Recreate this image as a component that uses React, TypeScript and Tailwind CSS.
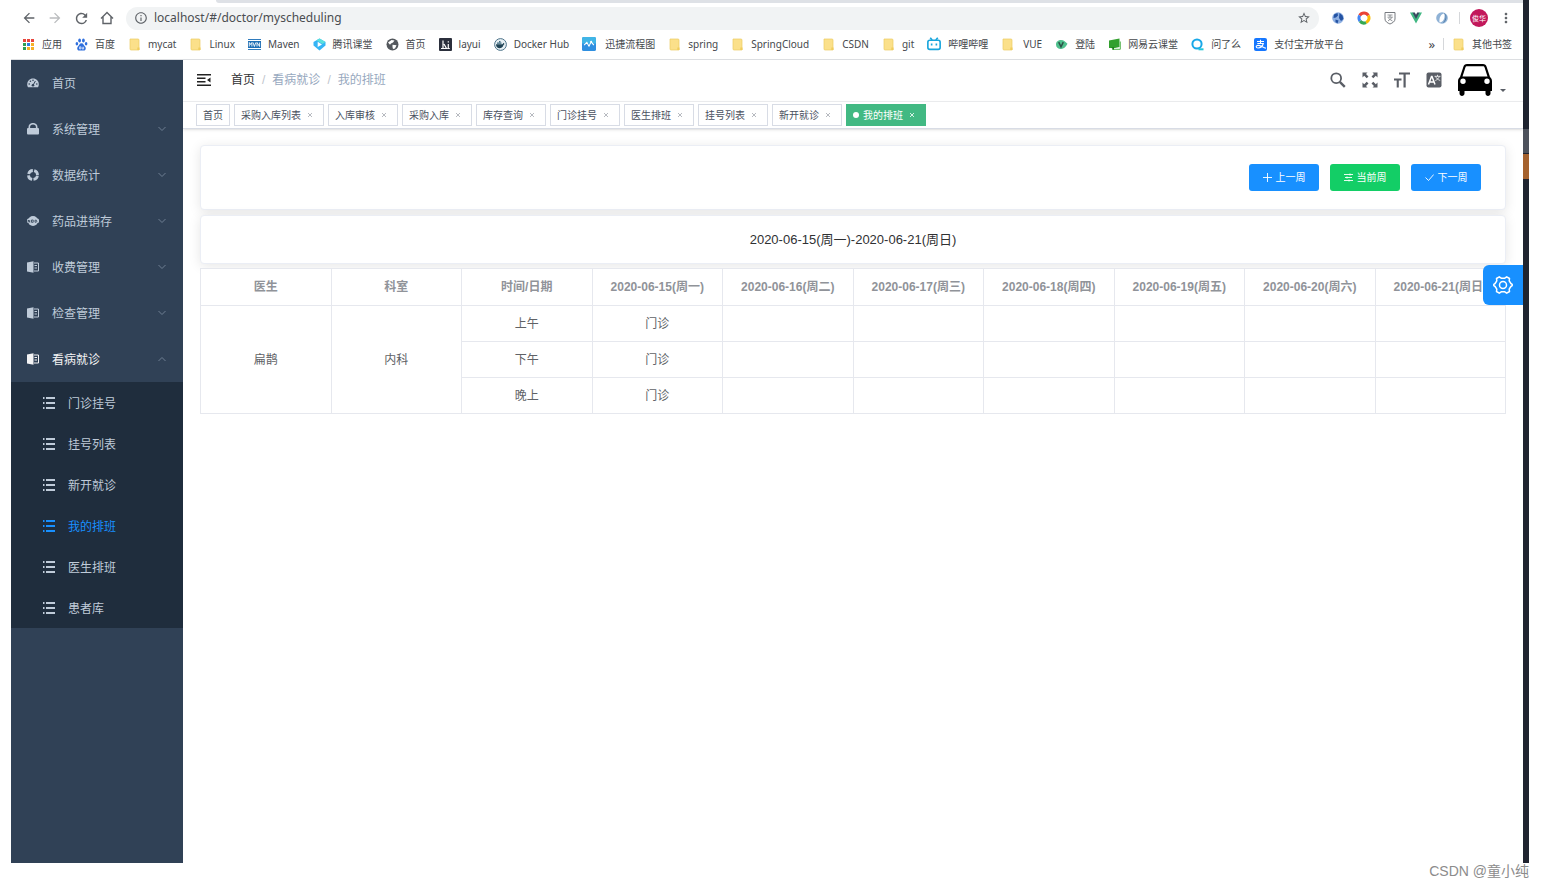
import React, { useState } from 'react';
import clsx from 'clsx';
import {
  MdArrowBack,
  MdArrowForward,
  MdInfoOutline,
  MdMoreVert,
  MdRefresh,
  MdStarBorder,
} from 'react-icons/md';

/* ---------- Bookmark icons ---------- */

const Folder = () => (
  <svg viewBox="0 0 13 13" className="size-[13px]">
    <path d="M2 1h8a1 1 0 0 1 1 1v10H3a1 1 0 0 1-1-1z" fill="#fbe08a" stroke="#eccb62" strokeWidth=".7" />
    <path d="M9.300 9.500h2.200V12H9.300z" fill="#f0cd5d" />
  </svg>
);

const AppsIcon = () => (
  <svg viewBox="0 0 13 13" className="size-[13px]">
    {['#e8453c', '#e8453c', '#e8453c', '#2e9e52', '#2f7de1', '#f6b026', '#2e9e52', '#f6b026', '#f6b026'].map((c, i) => (
      <rect key={i} x={1 + (i % 3) * 4} y={1 + Math.floor(i / 3) * 4} width="3" height="3" fill={c} />
    ))}
  </svg>
);

const BaiduIcon = () => (
  <svg viewBox="0 0 13 13" className="size-[13px]" fill="#2f6fdd">
    <ellipse cx="4.600" cy="2.600" rx="1.400" ry="2" />
    <ellipse cx="8.400" cy="2.600" rx="1.400" ry="2" />
    <ellipse cx="1.900" cy="5.800" rx="1.300" ry="1.800" />
    <ellipse cx="11.100" cy="5.800" rx="1.300" ry="1.800" />
    <path d="M6.500 5.200c2 0 2.300 2 3.500 3.200 1.400 1.500.8 4.100-1.300 4.100H4.300c-2.100 0-2.700-2.600-1.300-4.100C4.200 7.200 4.500 5.200 6.500 5.200z" />
    <path d="M4.600 8.800h1.200v2.200H4.600zM7.200 8.800v2.200h1.400V8.800" fill="none" stroke="#fff" strokeWidth=".7" />
  </svg>
);

const MavenIcon = () => (
  <svg viewBox="0 0 13 13" className="size-[13px]">
    <path d="M0 1.500h13M0 11.500h13" stroke="#2f7bbd" strokeWidth="1" />
    <rect y="3" width="13" height="7" fill="#1f6fb5" />
    <path d="M1.300 8.500v-4l1.300 2 1.300-2v4M5 4.500l1.400 4 1.400-4M9 8.500v-4l2.600 4v-4" fill="none" stroke="#fff" strokeWidth=".9" />
  </svg>
);

const TencentIcon = () => (
  <svg viewBox="0 0 13 13" className="size-[13px]">
    <path d="M6.500.500 12.500 4v3.500l-6 5-6-5V4z" fill="#35b4f5" />
    <path d="M6.500.500 12.500 4l-3 2-6-3.700z" fill="#5be0dc" />
    <path d="M4.700 3.800 9 6.500 4.700 9z" fill="#fff" />
  </svg>
);

const GlobeIcon = () => (
  <svg viewBox="0 0 13 13" className="size-[13px]">
    <circle cx="6.500" cy="6.500" r="6" fill="#54585d" />
    <path d="M2 4.500 5.500 2l3 .5-1.500 2L5 5.500l-1 1.300zM6.500 6.800l4 .4-1.500 3.300-2 .5-.5-2z" fill="#fff" />
  </svg>
);

const LayuiIcon = () => (
  <svg viewBox="0 0 13 13" className="size-[13px]">
    <rect width="13" height="13" rx="1" fill="#2b2f3c" />
    <path d="M4 2.500v8M2 10.500h5.500L5 6M9.300 6v4.500M9.300 3.200v1.300M8.300 10.500h2.500" fill="none" stroke="#fff" strokeWidth="1.200" />
  </svg>
);

const DockerIcon = () => (
  <svg viewBox="0 0 13 13" className="size-[13px]">
    <circle cx="6.500" cy="6.500" r="5.900" fill="#e8f0f4" stroke="#4c7288" strokeWidth="1" />
    <path d="M2 6.300h6.500l1-1.500 1 1.200-1 1C8.800 9.600 7 10.300 5.200 10.200 3 10 2 8.500 2 6.300z" fill="#1f4355" />
    <path d="M3 4.500h4.500v1.300H3zM5 3h1.500v1.200H5z" fill="#3d6a80" />
  </svg>
);

const FlowIcon = () => (
  <svg viewBox="0 0 13 13" className="size-[14px]">
    <rect width="13" height="13" rx="1.500" fill="#2f8fe0" />
    <path d="M0 1.500Q0 0 1.500 0h10Q13 0 13 1.500V6H0z" fill="#40b5e6" />
    <path d="M2 7.500 4.500 5l2 3.500L8.500 4.500l2.500 3" fill="none" stroke="#fff" strokeWidth="1" />
    <circle cx="8.500" cy="4.300" r=".9" fill="#fff" />
  </svg>
);

const BiliIcon = () => (
  <svg viewBox="0 0 13 13" className="size-[14px]" fill="none" stroke="#18a5dc" strokeWidth="1.500">
    <rect x=".8" y="3" width="11.400" height="8.500" rx="1.800" />
    <path d="M3 .600 4.800 2.800M10 .600 8.200 2.800M4.300 6v1.800M8.700 6v1.800" />
  </svg>
);

const LoginIcon = () => (
  <svg viewBox="0 0 13 13" className="size-[13px]">
    <path d="M1 6.500C1 3.700 3.300 2 6 2c3 0 4.500 2 6.500 3.700C11 8.500 9 11 6 11S1 9.300 1 6.500z" fill="#4fc08d" />
    <path d="m3.700 4.200 2.300 4.600 2.300-4.600" fill="none" stroke="#2c5147" strokeWidth="1.500" />
  </svg>
);

const NeteaseIcon = () => (
  <svg viewBox="0 0 13 13" className="size-[13px]">
    <path d="M1 2.500 11.500.500v8.500L7 10H1z" fill="#32a02e" />
    <path d="M12.300 3.500v7.800H4" fill="none" stroke="#55b351" strokeWidth="1" />
    <path d="M3 9.500 6 12V9z" fill="#1c7f19" />
  </svg>
);

const AskIcon = () => (
  <svg viewBox="0 0 13 13" className="size-[13px]" fill="none" strokeWidth="2">
    <circle cx="6" cy="6" r="4.600" stroke="#18a8e8" />
    <path d="M7.500 11.300h5" stroke="#23c5d8" />
  </svg>
);

const AlipayIcon = () => (
  <svg viewBox="0 0 13 13" className="size-[13px]">
    <rect width="13" height="13" rx="2" fill="#1677ff" />
    <path d="M3 3.500h7M6.500 1.800V5.500M3.300 5.500h6C8.500 8.300 6.500 10 4 10c-2.300 0-2.500-2.600 0-2.600 2.500 0 4.500 1.800 8 2.900" fill="none" stroke="#fff" strokeWidth="1.100" />
  </svg>
);

const bookmarks = [
  { label: '应用', icon: <AppsIcon /> },
  { label: '百度', icon: <BaiduIcon /> },
  { label: 'mycat', icon: <Folder /> },
  { label: 'Linux', icon: <Folder /> },
  { label: 'Maven', icon: <MavenIcon /> },
  { label: '腾讯课堂', icon: <TencentIcon /> },
  { label: '首页', icon: <GlobeIcon /> },
  { label: 'layui', icon: <LayuiIcon /> },
  { label: 'Docker Hub', icon: <DockerIcon /> },
  { label: '迅捷流程图', icon: <FlowIcon />, wide: true },
  { label: 'spring', icon: <Folder /> },
  { label: 'SpringCloud', icon: <Folder /> },
  { label: 'CSDN', icon: <Folder /> },
  { label: 'git', icon: <Folder /> },
  { label: '哔哩哔哩', icon: <BiliIcon /> },
  { label: 'VUE', icon: <Folder />, wide: true },
  { label: '登陆', icon: <LoginIcon /> },
  { label: '网易云课堂', icon: <NeteaseIcon /> },
  { label: '问了么', icon: <AskIcon /> },
  { label: '支付宝开放平台', icon: <AlipayIcon /> },
];

/* ---------- Browser chrome ---------- */

const HomeOutline = () => (
  <svg viewBox="0 0 14 14" className="size-[14px]" fill="none" stroke="#5f6368" strokeWidth="1.400">
    <path d="M1 7.500 7 1.500l6 6M3 6v6.500h8V6" />
  </svg>
);

const extensions = [
  {
    name: 'Globe',
    icon: (
      <svg viewBox="0 0 14 14" className="size-[14px]">
        <circle cx="7" cy="7" r="5.800" fill="#8fb0e2" />
        <path d="M3 3.500 6.500 2l.5 2.500L5 6.500l-2.500.5zM8.500 2l3 2.500L12.500 8 10 10 8 7zM4.500 8.500l3 1-1 3-2-1.500z" fill="#2453a3" />
      </svg>
    ),
  },
  {
    name: 'Color ring',
    icon: (
      <svg viewBox="0 0 14 14" className="size-[14px]" fill="none" strokeWidth="3">
        <path d="M2.700 4.500A5 5 0 0 1 11.300 4.500" stroke="#ea4335" />
        <path d="M11.300 4.500A5 5 0 0 1 9 11.600" stroke="#fbbc05" />
        <path d="M9 11.600A5 5 0 0 1 3 10" stroke="#34a853" />
        <path d="M3 10A5 5 0 0 1 2.700 4.500" stroke="#4285f4" />
      </svg>
    ),
  },
  {
    name: 'Shield',
    icon: (
      <svg viewBox="0 0 14 14" className="size-[14px]" fill="none" stroke="#777b80">
        <path d="M2 1.500h10V8c0 2.500-2.500 4-5 5-2.500-1-5-2.500-5-5z" />
        <path d="M4.500 4h5M7 4v2M4.500 6.200h5L5 10M5.500 7.500l4 2.500" strokeWidth=".8" />
      </svg>
    ),
  },
  {
    name: 'Vue devtools',
    icon: (
      <svg viewBox="0 0 14 14" className="size-[14px]">
        <path d="M1 1.500h3l3 5 3-5h3L7 12.500z" fill="#41b883" />
        <path d="M3.500 1.500h2.300L7 3.800l1.200-2.300h2.300L7 8z" fill="#35495e" />
      </svg>
    ),
  },
  {
    name: 'Compass',
    icon: (
      <svg viewBox="0 0 14 14" className="size-[14px]">
        <circle cx="7" cy="7" r="5.800" fill="#8fb2d6" />
        <path d="M9.500 2.500C6 3 4 6 4.500 11.500 8 11 10 8 9.500 2.500z" fill="#fff" />
        <path d="M9.500 2.500c2 2 2 6-1 9" fill="none" stroke="#4f7ba8" />
      </svg>
    ),
  },
];

function BrowserBar() {
  return (
    <div className="border-b border-[#dcdee1] bg-white">
      <div className="flex h-[3px]">
        <div className="w-[205px] bg-white" />
        <div className="flex-1 rounded-bl bg-[#dee1e6]" />
      </div>
      <div className="flex h-[30px] items-center pr-[9px] pl-[10px] text-[#5f6368]">
        <div className="flex items-center gap-[10px]">
          <button aria-label="Back"><MdArrowBack size={16} /></button>
          <button aria-label="Forward" className="text-[#babcbe]"><MdArrowForward size={16} /></button>
          <button aria-label="Reload"><MdRefresh size={17} /></button>
          <button aria-label="Home"><HomeOutline /></button>
        </div>
        <div className="ml-3 flex h-[23px] flex-1 items-center gap-[6px] rounded-full bg-[#f1f3f4] px-2">
          <MdInfoOutline size={14} />
          <input
            aria-label="Address"
            defaultValue="localhost/#/doctor/myscheduling"
            className="flex-1 bg-transparent font-['Noto_Sans'] text-[12px] text-[#4a4d51] outline-none"
          />
          <button aria-label="Bookmark this page"><MdStarBorder size={14} /></button>
        </div>
        <div className="ml-3 flex items-center gap-3">
          {extensions.map((ext) => (
            <button key={ext.name} aria-label={ext.name}>{ext.icon}</button>
          ))}
        </div>
        <div className="mx-[10px] h-3 w-px bg-[#d5d7da]" />
        <button className="size-[18px] rounded-full bg-[#c2185b] text-[7px] leading-none text-white">俊华</button>
        <button aria-label="Menu" className="ml-[10px]"><MdMoreVert size={16} /></button>
      </div>
      <nav className="flex h-[26px] items-center px-[11px] pb-1 font-['Noto_Sans','Noto_Sans_CJK_SC',sans-serif] text-[10px] text-[#45484c]">
        <div className="flex gap-[13px]">
          {bookmarks.map((b, i) => (
            <a key={i} href="#" className={clsx('flex items-center whitespace-nowrap', b.wide ? 'gap-[9px]' : 'gap-[7px]')}>
              {b.icon}
              {b.label}
            </a>
          ))}
        </div>
        <button aria-label="More bookmarks" className="ml-auto text-[13px] leading-none">»</button>
        <div className="mx-2 h-3 w-px bg-[#d5d7da]" />
        <a href="#" className="flex items-center gap-[7px]">
          <Folder />
          其他书签
        </a>
      </nav>
    </div>
  );
}

/* ---------- Sidebar ---------- */

const GaugeIcon = () => (
  <svg viewBox="0 0 12 12" className="size-3">
    <path d="M.200 7.500C.200 4 2.700 1.500 6 1.500S11.800 4 11.800 7.500c0 1-.3 2-.8 2.700H1C.500 9.500.200 8.500.200 7.500z" fill="currentColor" />
    <g fill="#304156">
      <circle cx="2.200" cy="7" r=".8" />
      <circle cx="3.400" cy="4.300" r=".8" />
      <circle cx="6" cy="3.200" r=".8" />
      <circle cx="9.800" cy="7" r=".8" />
      <circle cx="6" cy="8.300" r="1.300" />
    </g>
    <path d="m6 8.300 2.400-4.300" stroke="#304156" />
  </svg>
);

const LockIcon = () => (
  <svg viewBox="0 0 12 12" className="size-3">
    <rect y="5" width="12" height="6.500" rx="1" fill="currentColor" />
    <path d="M2.300 5.500V4a3.700 3.300 0 0 1 7.400 0v1.500" fill="none" stroke="currentColor" strokeWidth="1.600" />
  </svg>
);

const RingIcon = () => (
  <svg viewBox="0 0 12 12" className="size-3">
    <circle cx="6" cy="6" r="4.500" fill="none" stroke="currentColor" strokeWidth="2.800" strokeDasharray="5.700 1.369" strokeDashoffset="-.68" />
  </svg>
);

const BadgeIcon = () => (
  <svg viewBox="0 0 12 12" className="size-3">
    <circle cx="6" cy="6" r="5" fill="currentColor" />
    <rect y="3.500" width="12" height="4.600" rx="1.500" fill="currentColor" />
    <path d="M1.200 7.300V5l1.500 2.300V5M4.500 5v2.300h1.700V5zM8 7.200V5.200h1.300q1.200 1 0 2z" fill="none" stroke="#304156" strokeWidth=".8" />
  </svg>
);

const BookIcon = () => (
  <svg viewBox="0 0 12 12" className="size-3">
    <path d="M0 1.500 6.500.200v11.600L0 10.500z" fill="currentColor" />
    <path d="M7 2h4.500v8H7M7.500 4.500H10M7.500 7H10" fill="none" stroke="currentColor" strokeWidth="1" />
  </svg>
);

const ListIcon = () => (
  <svg viewBox="0 0 12 12" className="size-3" stroke="currentColor" strokeWidth="2">
    <path d="M0 1h1.500M3 1h9M0 6h1.500M3 6h9M0 11h1.500M3 11h9" />
  </svg>
);

const Chevron = ({ up = false }: { up?: boolean }) => (
  <svg viewBox="0 0 8 8" className={clsx('ml-auto h-2 w-2 text-[#76869a]', up && 'rotate-180')} fill="none" stroke="currentColor" strokeWidth=".9">
    <path d="m.500 2 3.500 3.500L7.500 2" />
  </svg>
);

const menu = [
  { label: '首页', icon: <GaugeIcon /> },
  { label: '系统管理', icon: <LockIcon />, sub: true },
  { label: '数据统计', icon: <RingIcon />, sub: true },
  { label: '药品进销存', icon: <BadgeIcon />, sub: true },
  { label: '收费管理', icon: <BookIcon />, sub: true },
  { label: '检查管理', icon: <BookIcon />, sub: true },
  { label: '看病就诊', icon: <BookIcon />, sub: true, open: true },
];

const subMenu = ['门诊挂号', '挂号列表', '新开就诊', '我的排班', '医生排班', '患者库'];

function Sidebar() {
  return (
    <aside className="w-[172px] shrink-0 bg-[#304156] text-[12px] text-[#bfcbd9]">
      {menu.map((m) => (
        <a
          key={m.label}
          href="#"
          className={clsx('flex h-[46px] items-center gap-[13px] pr-[17px] pl-4', m.open && 'text-[#f4f4f5]')}
        >
          {m.icon}
          <span className="pt-0.5">{m.label}</span>
          {m.sub && <Chevron up={m.open} />}
        </a>
      ))}
      <div className="bg-[#1f2d3d]">
        {subMenu.map((s) => (
          <a
            key={s}
            href="#"
            className={clsx('flex h-[41px] items-center gap-[13px] pl-8', s === '我的排班' && 'text-[#1890ff]')}
          >
            <ListIcon />
            <span className="pt-0.5">{s}</span>
          </a>
        ))}
      </div>
    </aside>
  );
}

/* ---------- Header ---------- */

const FoldIcon = () => (
  <svg viewBox="0 0 14 12" className="h-3 w-[14px]" fill="#222">
    <path d="M0 0h14v1.500H0zM0 3.500h8.500V5H0zM0 7h8.500v1.500H0zM0 10.500h14V12H0zM13.500 3.500v5L10 6z" />
  </svg>
);

const SearchIcon = () => (
  <svg viewBox="0 0 16 16" className="size-4" fill="none" stroke="#5a5e66">
    <circle cx="6.200" cy="6.200" r="4.900" strokeWidth="1.800" />
    <path d="m9.800 9.800 5 5" strokeWidth="2.400" />
  </svg>
);

const FullscreenIcon = () => (
  <svg viewBox="0 0 16 16" className="size-4" fill="#5a5e66">
    <path d="M.500.500H5.500L4 2l2.500 2.500-1.800 1.800L2.200 3.800.500 5.500z" />
    <path d="M15.500.500H10.500L12 2 9.500 4.500l1.800 1.800 2.500-2.500 1.700 1.700z" />
    <path d="M.500 15.500H5.500L4 14l2.500-2.500-1.800-1.800-2.500 2.500-1.700-1.700z" />
    <path d="M15.500 15.500H10.500L12 14l-2.500-2.500 1.800-1.800 2.500 2.500 1.700-1.700z" />
  </svg>
);

const SizeIcon = () => (
  <svg viewBox="0 0 16 16" className="size-4" fill="#5a5e66">
    <path d="M5 .500h11v2h-4.300V15.500H9.500V2.500H5zM0 6.500h7.500v2H4.800v7H2.700v-7H0z" />
  </svg>
);

const LanguageIcon = () => (
  <svg viewBox="0 0 16 16" className="size-4">
    <rect x=".5" y=".5" width="15" height="15" rx="2" fill="#5a5e66" />
    <path d="M2.500 12.500 5.500 4.500h.5l3 8M3.700 10h4.200" fill="none" stroke="#fff" strokeWidth="1.500" />
    <path d="M8.500 4.300h6M11.500 2.800v1.500M9.700 4.500c.7 2 2 3 4.500 4M13.300 4.500c-.7 2-1.800 3-4 4" fill="none" stroke="#fff" strokeWidth=".8" />
  </svg>
);

const CarIcon = () => (
  <svg viewBox="0 0 34 32" className="h-8 w-[34px]">
    <path
      fillRule="evenodd"
      d="M9 0h16c2 0 3 1 3.600 2.800L32 13c1.500 1.200 2 2.500 2 4.500V27h-1.500v2.500c0 3.300-5 3.300-5 0V27h-21v2.500c0 3.300-5 3.300-5 0V27H0v-9.500C0 15.500.500 14.200 2 13L5.400 2.800C6 1 7 0 9 0zM9 2.300c-.9 0-1.300.3-1.600 1.200L4.500 12.500h25L26.600 3.500C26.300 2.600 25.900 2.300 25 2.300zM5 14.500a2.700 2.700 0 1 0 0 5.400 2.700 2.700 0 0 0 0-5.400zm24 0a2.700 2.700 0 1 0 0 5.400 2.700 2.700 0 0 0 0-5.400z"
    />
  </svg>
);

const initialTags = ['首页', '采购入库列表', '入库审核', '采购入库', '库存查询', '门诊挂号', '医生排班', '挂号列表', '新开就诊', '我的排班'];

function Header() {
  return (
    <header className="flex h-[42px] items-center border-b border-[#eeeff1] pr-[17px] pb-px pl-[14px]">
      <button aria-label="Toggle sidebar"><FoldIcon /></button>
      <nav className="ml-5 flex items-center gap-[7px] text-[12px] text-[#97a8be]">
        <a href="#" className="text-[#303133]">首页</a>
        <span className="text-[#c0c4cc]">/</span>
        <span>看病就诊</span>
        <span className="text-[#c0c4cc]">/</span>
        <span>我的排班</span>
      </nav>
      <div className="ml-auto flex items-center gap-4">
        <button aria-label="Search"><SearchIcon /></button>
        <button aria-label="Fullscreen"><FullscreenIcon /></button>
        <button aria-label="Font size"><SizeIcon /></button>
        <button aria-label="Language"><LanguageIcon /></button>
        <button aria-label="Account" className="flex items-end gap-2">
          <CarIcon />
          <span className="mb-1 border-x-[3px] border-t-[3px] border-x-transparent border-t-[#5a5e66]" />
        </button>
      </div>
    </header>
  );
}

function TagsView() {
  const [tags, setTags] = useState(initialTags);

  return (
    <div className="flex h-[27px] items-center gap-1 border-b border-[#d8dce5] px-[13px] text-[10px] text-[#495060] shadow-sm">
      {tags.map((tag) => {
        const active = tag === '我的排班';
        return (
          <div
            key={tag}
            className={clsx(
              'flex h-[22px] items-center border px-[6px]',
              active ? 'border-[#42b983] bg-[#42b983] text-white' : 'border-[#d8dce5] bg-white'
            )}
          >
            {active && <span className="mr-1 size-[6px] rounded-full bg-white" />}
            <a href="#">{tag}</a>
            {tag !== '首页' && (
              <button
                aria-label={`关闭${tag}`}
                onClick={() => setTags(tags.filter((t) => t !== tag))}
                className={clsx('ml-[2px] flex w-[14px] justify-center', active ? 'text-white' : 'text-[#a4a8b0]')}
              >
                <svg viewBox="0 0 4 4" className="size-1" stroke="currentColor" strokeWidth=".8">
                  <path d="m0 0 4 4M4 0 0 4" />
                </svg>
              </button>
            )}
          </div>
        );
      })}
    </div>
  );
}

/* ---------- Scheduling page ---------- */

const days = [
  '2020-06-15(周一)',
  '2020-06-16(周二)',
  '2020-06-17(周三)',
  '2020-06-18(周四)',
  '2020-06-19(周五)',
  '2020-06-20(周六)',
  '2020-06-21(周日)',
];
const columns = ['医生', '科室', '时间/日期', ...days];
const periods = ['上午', '下午', '晚上'];

const weekButtons = [
  { label: '上一周', color: 'bg-[#1890ff]', path: 'M4.500 0v9M0 4.500h9' },
  { label: '当前周', color: 'bg-[#13ce66]', path: 'M0 1.500h9M1 4.500h7M0 7.500h9M6 .500v2M3 3.500v2M5 6.500v2' },
  { label: '下一周', color: 'bg-[#1890ff]', path: 'm.500 4.500 3 3L8.700 1.500' },
];

const card = 'rounded border border-[#ebeef5] bg-white shadow-[0_2px_12px_rgba(0,0,0,0.1)]';

function Scheduling() {
  return (
    <main className="px-[17px] pt-4">
      <div className={clsx(card, 'mb-[5px] flex h-[65px] items-center justify-end gap-[11px] pr-6')}>
        {weekButtons.map((b) => (
          <button
            key={b.label}
            className={clsx('flex h-[27px] w-[70px] items-center justify-center gap-1 rounded-[3px] text-[10px] text-white', b.color)}
          >
            <svg viewBox="0 0 9 9" className="size-[9px]" fill="none" stroke="currentColor" strokeWidth=".9">
              <path d={b.path} />
            </svg>
            {b.label}
          </button>
        ))}
      </div>
      <div className={clsx(card, 'mb-1 flex h-[49px] items-center justify-center text-[13px] text-[#303133]')}>
        2020-06-15(周一)-2020-06-21(周日)
      </div>
      <table className="relative w-full table-fixed border-collapse bg-white text-center text-[12px] text-[#606266]">
        <thead>
          <tr className="h-[37px] text-[#909399]">
            {columns.map((c) => (
              <th key={c} className="border border-[#e6e8ee] whitespace-nowrap">{c}</th>
            ))}
          </tr>
        </thead>
        <tbody>
          {periods.map((p, i) => (
            <tr key={p} className="h-9">
              {i === 0 && <td rowSpan={3} className="border border-[#e6e8ee]">扁鹊</td>}
              {i === 0 && <td rowSpan={3} className="border border-[#e6e8ee]">内科</td>}
              <td className="border border-[#e6e8ee]">{p}</td>
              {days.map((d, j) => (
                <td key={d} className="border border-[#e6e8ee]">{j === 0 ? '门诊' : ''}</td>
              ))}
            </tr>
          ))}
        </tbody>
      </table>
    </main>
  );
}

const GearIcon = () => (
  <svg viewBox="0 0 20 20" className="size-5" fill="none" stroke="#fff" strokeWidth="1.500" strokeLinejoin="round">
    <path d="M6.300 1.800 8.200 3.200h3.600l1.900-1.400 2.800 1.700-.3 2.300 1.700 2.700 1.300.8v1.400l-1.300.8-1.700 2.700.3 2.300-2.800 1.700-1.900-1.400H8.200l-1.900 1.400-2.800-1.700.3-2.300-1.700-2.700-1.300-.8V9.300l1.300-.8 1.700-2.700-.3-2.300z" />
    <circle cx="10" cy="10" r="3.500" />
  </svg>
);

export default function App() {
  return (
    <div className="flex min-h-screen flex-col bg-white pr-[15px] pl-[11px] font-['Liberation_Sans','Noto_Sans_CJK_SC',sans-serif]">
      <div className="flex flex-1">
        <div className="relative flex min-w-0 flex-1 flex-col">
          <BrowserBar />
          <div className="flex flex-1">
            <Sidebar />
            <div className="min-w-0 flex-1">
              <Header />
              <TagsView />
              <Scheduling />
            </div>
          </div>
          <button
            aria-label="Settings"
            className="absolute top-[265px] right-0 flex size-10 items-center justify-center rounded-l-md bg-[#1890ff]"
          >
            <GearIcon />
          </button>
        </div>
        {/* Edge of the window behind the browser */}
        <div className="flex w-[6px] flex-col bg-[#1f2430]">
          <div className="mt-[129px] h-6 bg-[#4d525c]" />
          <div className="mt-px h-[25px] bg-[#a5622e]" />
        </div>
      </div>
      <footer className="h-6 text-right text-[14px] leading-4 text-[#8c8c8c]">CSDN @童小纯</footer>
    </div>
  );
}
